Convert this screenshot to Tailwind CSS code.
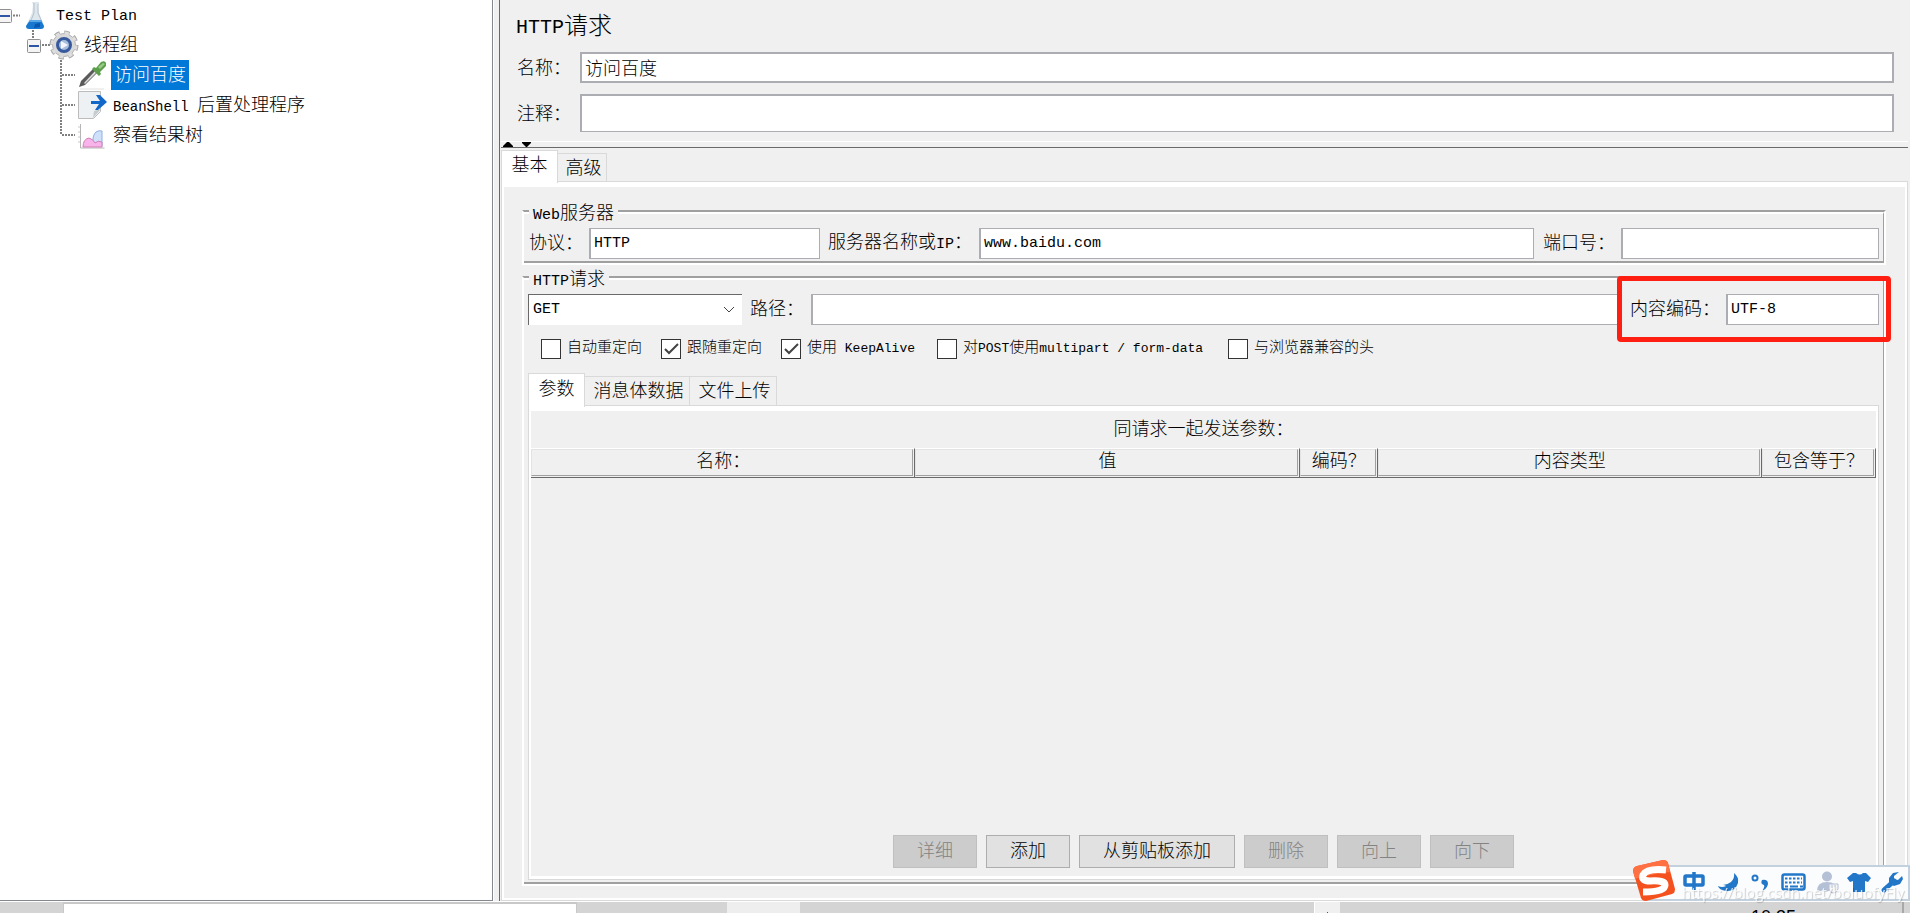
<!DOCTYPE html>
<html lang="zh-CN">
<head>
<meta charset="utf-8">
<title>HTTP请求</title>
<script src="https://cdn.jsdelivr.net/npm/@tailwindcss/browser@4"></script>
</head>
<body class="h-screen overflow-hidden flex flex-col bg-[#f0f0f0] text-black text-[18px] leading-6 font-light font-['Liberation_Mono','Noto_Sans_CJK_SC',monospace]">
<main class="flex-1 min-h-0 flex border-b border-white">

  <!-- Test plan tree -->
  <nav aria-label="Test Plan" class="w-[493px] shrink-0 bg-white border-r border-b border-[#828790]">
    <ul>
      <li class="flex h-[30px] items-center">
        <svg class="w-[54px] h-[30px] shrink-0" viewBox="0 0 54 30">
          <rect x="-2.5" y="9.5" width="14" height="13" rx="1" fill="#f4f4f4" stroke="#919191"/><path d="M0 16h10" stroke="#2f55a5" stroke-width="2"/>
          <path d="M13 15.5h7" stroke="#808080" stroke-width="2" stroke-dasharray="2 1"/>
          <path d="M32 2h7v2l-1 1 1 8 5 13q0 3-3 3H29q-3 0-3-3l6-13 1-8z" fill="#dfe7ee"/>
          <path d="M34 3v10l-5 12M38 4v9l4 9" stroke="#b3c1cc" fill="none"/>
          <path d="M30 20h11l3 6q0 3-3 3H29q-3 0-3-3z" fill="#1878cf"/><path d="M30 20h11l1 2H29z" fill="#5aa7e8"/><path d="M35 24l5-1v4l-6 1z" fill="#0a55b0"/>
        </svg>
        <span class="text-[15px] pl-[2px] pt-1">Test Plan</span>
      </li>
      <li class="flex h-[30px] items-center">
        <svg class="w-[84px] h-[30px] shrink-0" viewBox="0 0 84 30">
          <path d="M33 0v9M42 15h8" stroke="#808080" stroke-width="2" stroke-dasharray="2 1"/>
          <rect x="27.500" y="9.500" width="13" height="13" rx="1" fill="#f4f4f4" stroke="#919191"/><path d="M29 16h10" stroke="#2f55a5" stroke-width="2"/>
          <circle cx="64" cy="15" r="12" fill="none" stroke="#a4a4a4" stroke-width="5" stroke-dasharray="5 4.420"/>
          <circle cx="64" cy="15" r="11.500" fill="#d9d9d9" stroke="#b4b4b4"/>
          <circle cx="64" cy="15" r="12" fill="none" stroke="#dedede" stroke-width="3" stroke-dasharray="4 5.420" stroke-dashoffset="-0.500"/>
          <circle cx="64" cy="15" r="6.500" fill="#a9bddd" stroke="#365a9c" stroke-width="3"/><path d="M61 11l7 4-7 4z" fill="#f3f6fb"/>
        </svg>
        <span class="pt-[2px]">线程组</span>
      </li>
      <li class="flex h-[30px] items-center">
        <svg class="w-[111px] h-[30px] shrink-0" viewBox="0 0 111 30">
          <path d="M61 0v30M62 15h13" stroke="#808080" stroke-width="2" stroke-dasharray="2 1"/>
          <path d="M80 29h24" stroke="#e0e0e0"/>
          <path d="M79 27l2-6 12-12 4 4-12 12z" fill="#5a5a5a"/><path d="M84 23l11-12 1 2-11 11z" fill="#dcdcdc"/>
          <path d="M92 9l2-2 2 1 5-6q4-2 5 1v3l-6 6 1 2-2 2z" fill="#5d9e4a"/><path d="M98 7l5-4 2 1-5 5z" fill="#9acb86"/>
        </svg>
        <span class="h-[30px] flex items-center bg-[#0078d7] text-white px-[3px] pt-[2px]">访问百度</span>
      </li>
      <li class="flex h-[30px] items-center">
        <svg class="w-[111px] h-[30px] shrink-0" viewBox="0 0 111 30">
          <path d="M61 0v30M62 15h13" stroke="#808080" stroke-width="2" stroke-dasharray="2 1"/>
          <path d="M78.500 1.500h22v20l-7 7h-15z" fill="#eef1f3" stroke="#bcbcbc"/><path d="M93 28l1-7 7-2z" fill="#c5cbcf"/>
          <path d="M91 11h9l-4-6h4l7 7-9 8h-3l4-6h-8z" fill="#1268c8"/>
        </svg>
        <span class="pl-[2px] pt-[2px] whitespace-pre"><span class="text-[14px]">BeanShell </span>后置处理程序</span>
      </li>
      <li class="flex h-[30px] items-center">
        <svg class="w-[111px] h-[30px] shrink-0" viewBox="0 0 111 30">
          <path d="M61 0v15M62 15h13" stroke="#808080" stroke-width="2" stroke-dasharray="2 1"/>
          <path d="M80.500 4v24h24" stroke="#b5b5b5" fill="none"/><path d="M78 7h2M78 12h2M78 17h2M78 22h2" stroke="#c8c8c8"/>
          <path d="M93 26q-1-11 3-14 3-2 6-1v15z" fill="#cfe0fa" stroke="#8fb0e6"/>
          <path d="M83 27q0-8 6-9 4 1 6 5 3-3 7-1v5z" fill="#f7b3ea" stroke="#cf7fb4"/>
        </svg>
        <span class="pl-[2px] pt-[2px]">察看结果树</span>
      </li>
    </ul>
  </nav>
  <div class="w-[6px] shrink-0 border-l border-white"></div>

  <!-- Request editor -->
  <section class="flex-1 min-w-0 flex flex-col border-l border-[#696969] pr-[2px]">
    <h1 class="h-[52px] flex items-center pl-4 pt-1 text-[24px]"><span class="text-[20px]">HTTP</span>请求</h1>
    <div class="flex items-center h-[31px] pl-[17px] pr-[14px]">
      <label for="name" class="w-[63px] shrink-0 pt-[2px]">名称：</label>
      <input id="name" value="访问百度" class="flex-1 min-w-0 h-full bg-white border-2 border-[#abadb3] px-[3px] pb-[2px]">
    </div>
    <div class="flex items-center h-[38px] mt-[11px] pl-[17px] pr-[14px]">
      <label for="note" class="w-[63px] shrink-0 pt-1">注释：</label>
      <input id="note" class="flex-1 min-w-0 h-full bg-white border-2 border-b border-[#abadb3] px-[3px]">
    </div>
    <div class="mt-[9px] ml-px h-[7px] shrink-0 border-t border-t-white border-b border-b-[#696969]">
      <svg class="block h-[5px] w-8" viewBox="0 0 32 5"><path d="M2 5v-1l4-4h2l4 4v1zM21 0h9v1l-4 4h-1l-4-4z" fill="#000"/></svg>
    </div>

    <div role="tablist" class="flex items-end h-[31px] mt-[2px] ml-px shrink-0">
      <button role="tab" aria-selected="true" class="relative z-10 -mb-[2px] h-[33px] w-[57px] pb-[2px] bg-white border border-b-0 border-[#d9d9d9]">基本</button>
      <button role="tab" class="h-7 w-[49px] pt-[2px] pl-[3px] border border-l-0 border-b-0 border-[#d9d9d9]">高级</button>
    </div>
    <div class="flex-1 min-h-0 flex flex-col ml-px border border-[#d9d9d9]">
      <div class="flex-1 min-h-0 flex flex-col gap-[11px] border-2 border-t-[5px] border-white pt-[23px] pb-3 pl-[18px] pr-[19px]">

        <div role="group" aria-labelledby="web" class="relative border-2 border-white border-t-[#a0a0a0]">
          <span id="web" class="absolute -top-2 left-[5px] bg-[#f0f0f0] px-1 leading-5"><span class="text-[15px]">Web</span>服务器</span>
          <div class="flex items-center border-t-2 border-t-white border-r border-r-[#a0a0a0] border-b-2 border-b-[#a0a0a0] pt-[14px] pb-[2px] pl-[5px] pr-1">
            <label for="proto" class="w-[60px] shrink-0">协议：</label>
            <input id="proto" value="HTTP" class="w-[231px] h-[31px] bg-white border border-l-2 border-[#abadb3] px-[3px] text-[15px]">
            <label for="host" class="w-[151px] ml-2 shrink-0">服务器名称或<span class="text-[15px]">IP</span>：</label>
            <input id="host" value="www.baidu.com" class="flex-1 min-w-0 h-[31px] bg-white border border-l-2 border-[#abadb3] px-[3px] text-[15px]">
            <label for="port" class="w-[78px] ml-[9px] shrink-0">端口号：</label>
            <input id="port" class="w-[258px] h-[31px] bg-white border border-l-2 border-[#abadb3] px-[3px] text-[15px]">
          </div>
        </div>

        <div role="group" aria-labelledby="req" class="relative flex-1 min-h-0 flex flex-col border-2 border-white border-t-[#a0a0a0]">
          <span id="req" class="absolute -top-2 left-[5px] bg-[#f0f0f0] px-1 leading-5"><span class="text-[15px]">HTTP</span>请求</span>
          <div class="flex-1 min-h-0 flex flex-col border-t-2 border-t-white border-r border-r-[#a0a0a0] border-b-2 border-b-[#a0a0a0] pt-[14px] pb-[2px] px-1">
            <div class="flex items-center">
              <div class="relative w-[214px] shrink-0">
                <select aria-label="HTTP请求" class="block appearance-none w-full h-[31px] bg-white border-t border-l border-[#696969] pl-1 text-[15px]"><option>GET</option></select>
                <svg class="absolute right-[7px] top-[12px] w-3 h-2 pointer-events-none" viewBox="0 0 12 8"><path d="M1 1l5 5 5-5" fill="none" stroke="#444"/></svg>
              </div>
              <label for="path" class="w-[61px] ml-2 shrink-0">路径：</label>
              <input id="path" class="flex-1 min-w-0 h-[31px] bg-white border border-l-2 border-[#abadb3] px-[3px] text-[15px]">
              <div class="relative flex items-center pl-[9px]">
                <label for="enc" class="w-[96px] shrink-0">内容编码：</label>
                <input id="enc" value="UTF-8" class="w-[153px] h-[31px] bg-white border border-l-2 border-[#abadb3] px-[3px] text-[15px]">
                <div class="absolute -top-[18px] -bottom-[17px] -left-1 -right-3 border-[5px] border-[#ff1e12] rounded-[4px] pointer-events-none"></div>
              </div>
            </div>

            <div class="flex items-center h-5 mt-[14px] pl-[13px] text-[15px] leading-5 whitespace-pre">
              <label class="flex items-center gap-[6px] w-[120px]"><input type="checkbox" class="appearance-none size-5 shrink-0 bg-white border border-[#333]">自动重定向</label>
              <label class="relative flex items-center gap-[6px] w-[120px]"><input type="checkbox" checked class="appearance-none size-5 shrink-0 bg-white border border-[#333]"><svg class="absolute left-[3px] top-[4px] w-[15px] h-3 pointer-events-none" viewBox="0 0 15 12"><path d="M1 6l4 4L14 1" fill="none" stroke="#444" stroke-width="2"/></svg>跟随重定向</label>
              <label class="relative flex items-center gap-[6px] w-[156px]"><input type="checkbox" checked class="appearance-none size-5 shrink-0 bg-white border border-[#333]"><svg class="absolute left-[3px] top-[4px] w-[15px] h-3 pointer-events-none" viewBox="0 0 15 12"><path d="M1 6l4 4L14 1" fill="none" stroke="#444" stroke-width="2"/></svg><span>使用<span class="text-[13px]"> KeepAlive</span></span></label>
              <label class="flex items-center gap-[6px] w-[291px]"><input type="checkbox" class="appearance-none size-5 shrink-0 bg-white border border-[#333]"><span>对<span class="text-[13px]">POST</span>使用<span class="text-[13px]">multipart / form-data</span></span></label>
              <label class="flex items-center gap-[6px]"><input type="checkbox" class="appearance-none size-5 shrink-0 bg-white border border-[#333]">与浏览器兼容的头</label>
            </div>

            <div role="tablist" class="flex items-end h-8 mt-[14px] shrink-0">
              <button role="tab" aria-selected="true" class="relative z-10 -mb-[2px] h-[34px] w-[57px] pb-[2px] bg-white border border-b-0 border-[#d9d9d9]">参数</button>
              <button role="tab" class="h-[29px] w-[105px] pt-[2px] pl-[3px] border border-l-0 border-b-0 border-[#d9d9d9]">消息体数据</button>
              <button role="tab" class="h-[29px] w-[87px] pt-[2px] pl-[3px] border border-l-0 border-b-0 border-[#d9d9d9]">文件上传</button>
            </div>
            <div class="flex-1 min-h-0 flex flex-col border border-[#d9d9d9]">
              <div class="flex-1 min-h-0 flex flex-col border-2 border-t-[5px] border-b-[3px] border-white pb-2">
                <h2 class="h-[37px] flex items-center justify-center">同请求一起发送参数：</h2>
                <table class="w-full table-fixed border-separate border-spacing-0">
                  <thead>
                    <tr>
                      <th class="p-0 pb-px pr-px font-light border-t border-t-white border-r border-b border-r-[#696969] border-b-[#696969]"><div class="h-[27px] pl-[2px] border border-[#e3e3e3] border-r-[#a0a0a0] border-b-[#a0a0a0]">名称：</div></th>
                      <th class="p-0 pb-px pr-px font-light border-t border-t-white border-r border-b border-r-[#696969] border-b-[#696969]"><div class="h-[27px] pl-[2px] border border-[#e3e3e3] border-r-[#a0a0a0] border-b-[#a0a0a0]">值</div></th>
                      <th class="w-[78px] p-0 pb-px pr-px font-light border-t border-t-white border-r border-b border-r-[#696969] border-b-[#696969]"><div class="h-[27px] pl-[2px] border border-[#e3e3e3] border-r-[#a0a0a0] border-b-[#a0a0a0]">编码？</div></th>
                      <th class="p-0 pb-px pr-px font-light border-t border-t-white border-r border-b border-r-[#696969] border-b-[#696969]"><div class="h-[27px] pl-[2px] border border-[#e3e3e3] border-r-[#a0a0a0] border-b-[#a0a0a0]">内容类型</div></th>
                      <th class="w-[114px] p-0 pb-px pr-px font-light border-t border-t-white border-r border-b border-r-[#696969] border-b-[#696969]"><div class="h-[27px] pl-[2px] border border-[#e3e3e3] border-r-[#a0a0a0] border-b-[#a0a0a0]">包含等于？</div></th>
                    </tr>
                  </thead>
                </table>
                <div class="mt-auto flex justify-center gap-[9px]">
                  <button disabled class="h-[33px] w-[84px] border border-[#bfbfbf] bg-[#ccc] text-[#838383]">详细</button>
                  <button class="h-[33px] w-[84px] border border-[#adadad] bg-[#e1e1e1]">添加</button>
                  <button class="h-[33px] w-[156px] border border-[#adadad] bg-[#e1e1e1]">从剪贴板添加</button>
                  <button disabled class="h-[33px] w-[84px] border border-[#bfbfbf] bg-[#ccc] text-[#838383]">删除</button>
                  <button disabled class="h-[33px] w-[84px] border border-[#bfbfbf] bg-[#ccc] text-[#838383]">向上</button>
                  <button disabled class="h-[33px] w-[84px] border border-[#bfbfbf] bg-[#ccc] text-[#838383]">向下</button>
                </div>
              </div>
            </div>
          </div>
        </div>
      </div>
    </div>
  </section>
</main>

<!-- Top edge of the desktop taskbar -->
<footer class="h-[11px] shrink-0 overflow-hidden flex bg-[#d4d4d4]">
  <div class="w-[63px] shrink-0"></div>
  <div class="w-[514px] shrink-0 bg-white border-t-2 border-x border-[#c8c8c8]"></div>
  <div class="w-[150px] shrink-0"></div>
  <div class="w-[73px] shrink-0 bg-[#eee]"></div>
  <div class="w-[514px] shrink-0"></div>
  <div class="w-[26px] shrink-0 bg-[#f0f0f0] border-l border-white flex justify-center items-end"><span class="w-px h-px bg-[#555]"></span></div>
  <time class="ml-auto mr-[106px] pt-[5px] font-normal text-[18px] leading-5 font-['Liberation_Sans',sans-serif]">10:35</time>
  <div class="w-[2px] mr-[6px] shrink-0 bg-[#a8a8a8]"></div>
</footer>

<!-- Floating input-method toolbar -->
<aside class="fixed right-0 bottom-[12px] w-[277px] h-[42px]">
  <div class="absolute inset-x-0 bottom-0 h-9 ml-3 bg-[#fbfcfe] border-2 border-[#c3d1de]"></div>
  <svg class="absolute left-0 top-0 w-full h-full" viewBox="0 0 277 42">
    <path d="M4 7L30 1q4 0 5 3l7 26q0 4-3 5L13 42q-4 0-5-3L0 12q0-4 4-5z" fill="#f4511e"/>
    <path d="M4 7L30 1q4 0 5 3l2 9Q18 15 2 20L0 12q0-4 4-5z" fill="#ff7043"/>
    <path d="M33 11Q14 9 10 16q-2 6 7 6 15-1 15 4 0 7-22 7" fill="none" stroke="#fff" stroke-width="7"/>
    <g transform="translate(-1 1)" fill="none" stroke="#2277c9" stroke-width="3.500">
      <rect x="53" y="16" width="18" height="9" rx="1"/><path d="M62 12v18"/>
      <circle cx="123" cy="18" r="2.500" stroke-width="2"/>
    </g>
    <path d="M101 14q5 4 4 10-3 9-12 8-7-1-8-5 4 2 8 0-1-1-3-1 4 0 8-3 4-4 3-9z" fill="#2277c9"/>
    <path d="M129 21q6-1 6 4-1 5-6 7 3-4 2-6-4-1-2-5z" fill="#2277c9"/>
    <rect x="149.500" y="15.500" width="22" height="15" rx="2" fill="none" stroke="#2277c9" stroke-width="2.500"/>
    <path d="M152 19.500h17M152 23.500h17" stroke="#2277c9" stroke-width="2" stroke-dasharray="2.500 1.500"/><path d="M152 27.500h3M157 27.500h8M167 27.500h3" stroke="#2277c9" stroke-width="2"/>
    <circle cx="194" cy="17.500" r="5" fill="#b4c0d6"/><path d="M184 32q0-9 10-9t9 9z" fill="#b4c0d6"/>
    <path d="M196 25h9v5q-2 4-5 4t-4-4z" fill="#f5f5f5" stroke="#b4c0d6"/><path d="M199 26v3M202 26v3" stroke="#b4c0d6"/>
    <path d="M220 14h3q4 3 7 0h3l5 5-3 4-3-1v11h-12V22l-3 1-3-4z" fill="#2277c9"/>
    <path d="M251 31l10-9" stroke="#2277c9" stroke-width="5" stroke-linecap="round"/><path d="M266 13l-6 1-4 5v5l5 3 6-2 3-5-1-3-4 4-4-1v-3z" fill="#2277c9"/>
  </svg>
  <span class="absolute left-[49px] top-[23px] whitespace-nowrap font-normal text-[15px] leading-5 text-white/80 font-['Open_Sans',sans-serif] [text-shadow:1px_1px_1px_rgba(0,0,0,0.2)]">https://blog.csdn.net/boluofyFly</span>
</aside>
</body>
</html>
